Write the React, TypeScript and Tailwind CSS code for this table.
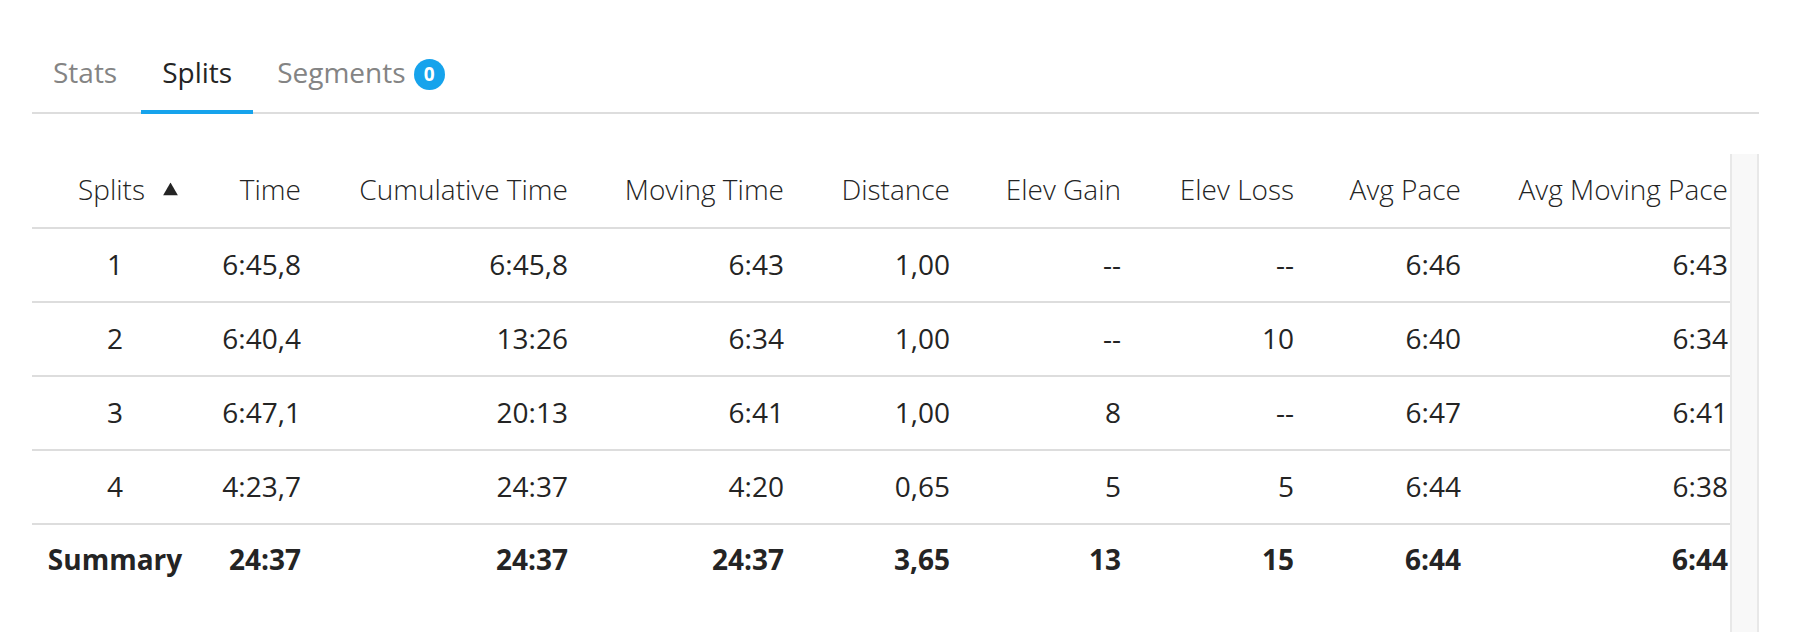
import React from "react";

const rows = [
  ["1", "6:45,8", "6:45,8", "6:43", "1,00", "--", "--", "6:46", "6:43"],
  ["2", "6:40,4", "13:26", "6:34", "1,00", "--", "10", "6:40", "6:34"],
  ["3", "6:47,1", "20:13", "6:41", "1,00", "8", "--", "6:47", "6:41"],
  ["4", "4:23,7", "24:37", "4:20", "0,65", "5", "5", "6:44", "6:38"],
];
const summary = ["Summary", "24:37", "24:37", "24:37", "3,65", "13", "15", "6:44", "6:44"];
const headers = ["Time", "Cumulative Time", "Moving Time", "Distance", "Elev Gain", "Elev Loss", "Avg Pace", "Avg Moving Pace"];
const widths = ["w-[151px]", "w-[118px]", "w-[267px]", "w-[216px]", "w-[166px]", "w-[171px]", "w-[173px]", "w-[167px]", "w-[269px]"];

export default function App() {
  return (
    <div
      className="w-[1810px] h-[632px] overflow-hidden bg-white text-[#242424] pt-[52px]"
      style={{ fontFamily: '"Open Sans", "Noto Sans", sans-serif' }}
    >
      <ul className="flex ml-[32px] w-[1727px] border-b-2 border-[#dddddd] gap-[3px]">
        <li className="-mb-[2px] border-b-4 border-transparent px-[21px] pb-[18px] text-[28px] leading-[40px] text-[#848484]">
          Stats
        </li>
        <li className="-mb-[2px] border-b-4 border-[#16a3ec] px-[21px] pb-[18px] text-[28px] leading-[40px] text-[#242424]">
          Splits
        </li>
        <li className="-mb-[2px] border-b-4 border-transparent px-[21px] pb-[18px] text-[28px] leading-[40px] text-[#848484] flex items-center">
          <span>Segments</span>
          <span className="ml-[8px] mt-[4px] w-[31px] h-[31px] rounded-full bg-[#16a3ec] text-white text-[19px] font-bold flex items-center justify-center leading-none">
            0
          </span>
        </li>
      </ul>

      <div className="mt-[40px] flex h-[478px]">
        <div className="ml-[32px] w-[1698px]">
          <table className="table-fixed w-[1698px] border-collapse text-[28px]">
            <colgroup>
              {widths.map((w, i) => (
                <col key={i} className={w} />
              ))}
            </colgroup>
            <thead>
              <tr className="h-[74px] border-b-2 border-[#dddddd]">
                <th className="font-light text-center pl-[15px] pr-[7px] pt-0 pb-[3px]">
                  <span className="relative inline-block">
                    Splits
                    <svg
                      className="absolute left-full top-1/2 -translate-y-1/2 ml-[18px]"
                      width="15"
                      height="13"
                      viewBox="0 0 15 13"
                    >
                      <polygon points="7.5,0 15,13 0,13" fill="#242424" />
                    </svg>
                  </span>
                </th>
                {headers.map((h, i) => (
                  <th
                    key={h}
                    className={`font-light text-right pl-0 pt-0 pb-[3px] whitespace-nowrap ${i === headers.length - 1 ? "pr-[2px]" : "pr-0"}`}
                  >
                    {h}
                  </th>
                ))}
              </tr>
            </thead>
            <tbody>
              {rows.map((r) => (
                <tr key={r[0]} className="h-[74px] border-b-2 border-[#dddddd]">
                  {r.map((c, i) => (
                    <td
                      key={i}
                      className={
                        i === 0
                          ? "text-center pl-[15px] pr-0 pt-0 pb-[3px]"
                          : `text-right pl-0 pt-0 pb-[3px] ${i === r.length - 1 ? "pr-[2px]" : "pr-0"}`
                      }
                    >
                      {c}
                    </td>
                  ))}
                </tr>
              ))}
              <tr className="h-[72px] font-bold">
                {summary.map((c, i) => (
                  <td
                    key={i}
                    className={
                      i === 0
                        ? "text-center pl-[15px] pr-0 pt-0 pb-[3px]"
                        : `text-right pl-0 pt-0 pb-[3px] ${i === summary.length - 1 ? "pr-[2px]" : "pr-0"}`
                    }
                  >
                    {c}
                  </td>
                ))}
              </tr>
            </tbody>
          </table>
        </div>
        <div className="w-[29px] h-full border-l-2 border-r-2 border-[#e8e8e8] bg-[#f8f8f8]" />
      </div>
    </div>
  );
}
